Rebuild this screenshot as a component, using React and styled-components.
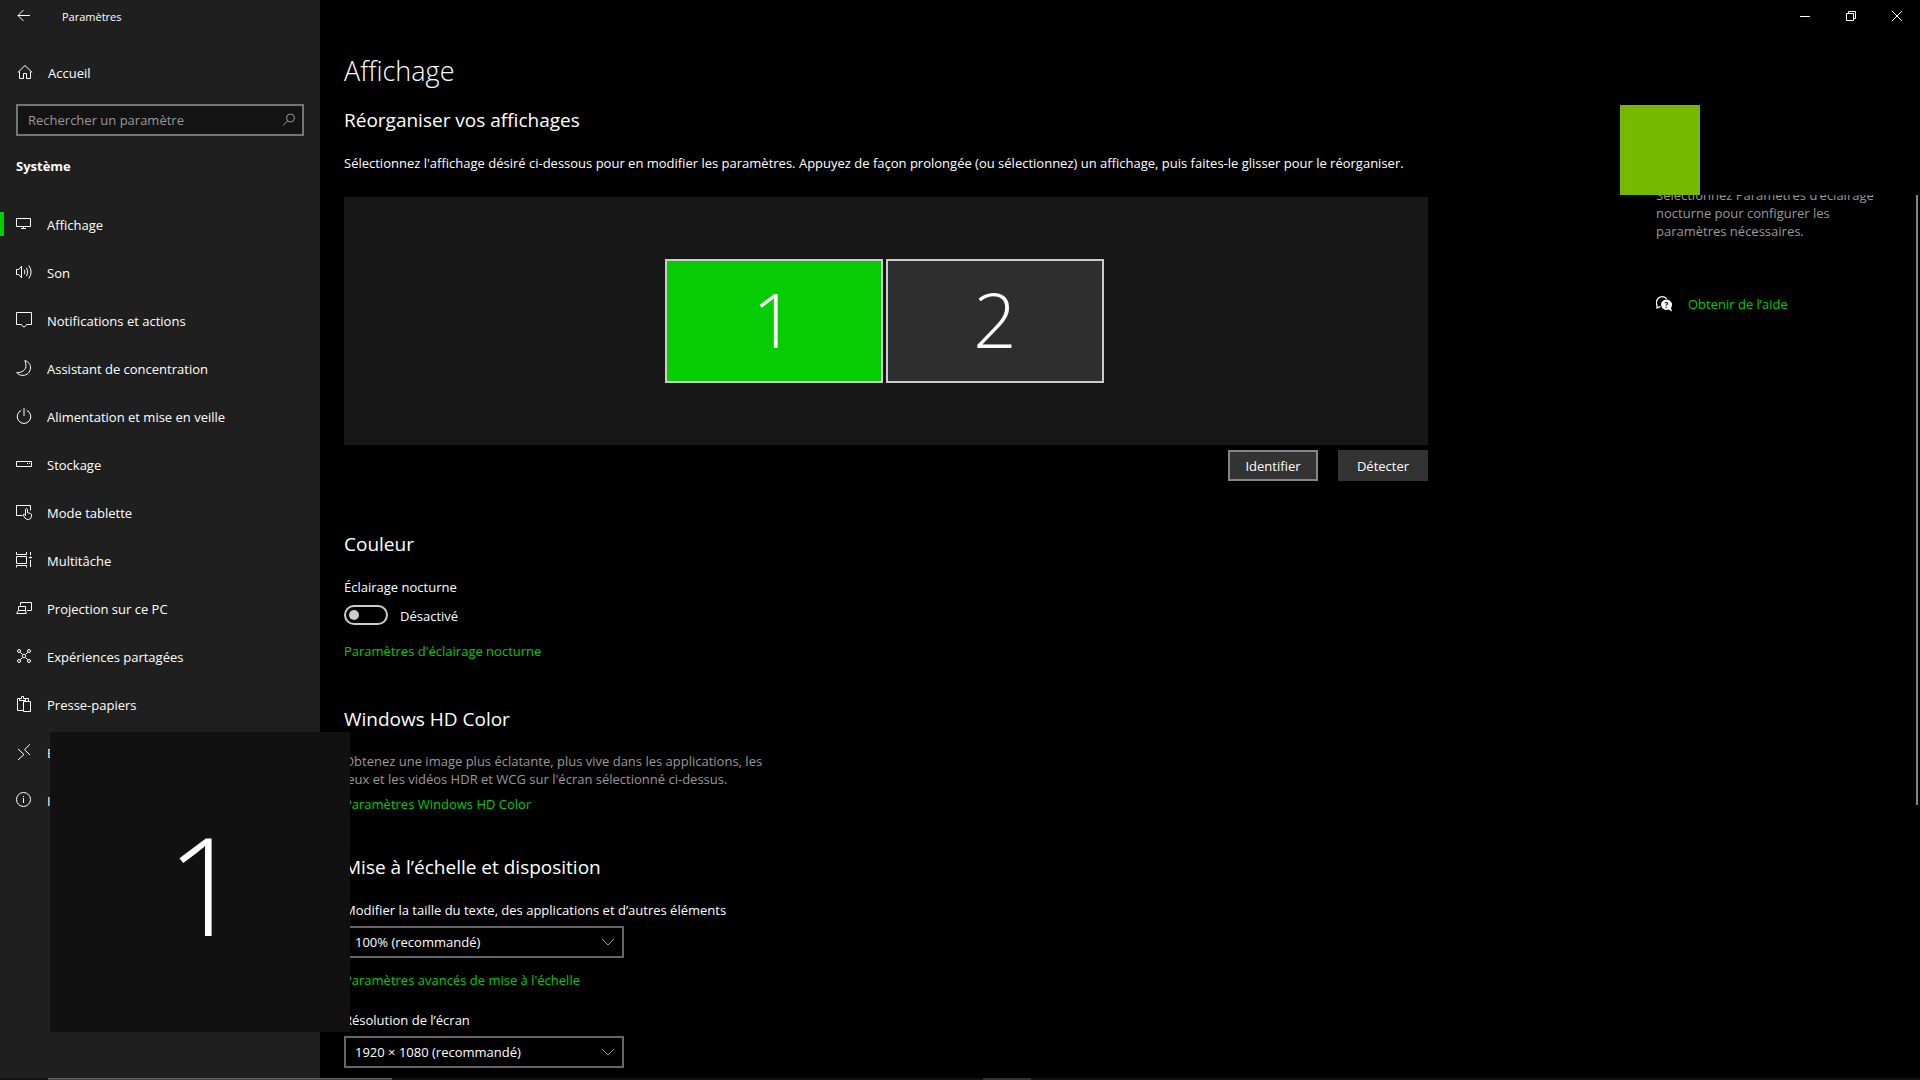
import React, { useState } from 'react';
import styled, { createGlobalStyle } from 'styled-components';

const GlobalStyle = createGlobalStyle`
  * {
    box-sizing: border-box;
  }

  body {
    margin: 0;
    background: #000;
    color: #fff;
    font-family: "Open Sans", "Noto Sans", sans-serif;
    font-size: 13px;
    line-height: 20px;
  }

  button, input, select {
    font: inherit;
    color: inherit;
    margin: 0;
  }
`

const Screen = styled.div`
  display: flex;
  flex-direction: column;
  min-height: 100vh;
`

const SettingsWindow = styled.div`
  display: flex;
  flex: 1;
`

const Sidebar = styled.aside`
  flex: 0 0 320px;
  background: #1f1f1f;
`

const TitleBar = styled.header`
  display: flex;
  align-items: center;
  height: 32px;
  font-size: 11px;
`

const IconButton = styled.button`
  display: flex;
  align-items: center;
  justify-content: center;
  width: ${props => props.$width}px;
  height: 32px;
  padding: 0;
  border: none;
  background: none;

  &:active {
    background: #333;
  }
`

const Label = styled.span`
  padding-top: 2px;
`

const AppName = styled(Label)`
  margin-left: 14px;
`

const SideLink = styled.a`
  display: flex;
  align-items: center;
  gap: 15px;
  height: 48px;
  padding-left: 16px;
  color: #fff;
  text-decoration: none;

  &:hover {
    background: #333;
  }
`

const HomeLink = styled(SideLink)`
  margin-top: 16px;
  padding-left: 17px;
`

const NavLink = styled(SideLink)`
  background: linear-gradient(#06cc04, #06cc04) no-repeat 0 center;
  background-size: ${props => props.$active ? '4px 24px' : '0 0'};
`

const SearchBox = styled.form`
  display: flex;
  align-items: center;
  height: 32px;
  margin: 8px 16px 0;
  padding-right: 5px;
  border: 2px solid #767676;
  background: #131313;
`

const SearchInput = styled.input`
  flex: 1;
  min-width: 0;
  padding: 0 10px;
  border: none;
  outline: none;
  background: none;

  &::placeholder {
    color: #999;
    opacity: 1;
  }
`

const SearchButton = styled.button`
  display: flex;
  padding: 0;
  border: none;
  background: none;
  color: #999;
`

const Category = styled.h2`
  margin: 20px 16px 24px;
  font-size: 13px;
  font-weight: 700;
`

const Main = styled.main`
  display: flex;
  flex: 1;
  flex-direction: column;
  min-width: 0;
`

const WindowControls = styled.div`
  display: flex;
  justify-content: flex-end;
`

const Columns = styled.div`
  display: flex;
  flex: 1;
  justify-content: space-between;
  padding-left: 24px;
`

const Content = styled.div`
  flex: 0 1 1084px;
  padding: 21px 0 10px;
`

const Title = styled.h1`
  margin: 0 0 16px;
  font-size: 27px;
  font-weight: 300;
  line-height: 36px;
`

const Heading = styled.h2`
  margin: 0 0 18px;
  font-size: 19px;
  font-weight: 400;
  line-height: 30px;
`

const Section = styled.section`
  display: flex;
  flex-direction: column;
  align-items: flex-start;
  margin-top: ${props => props.$top}px;
`

const Intro = styled.p`
  margin: 0 0 24px;
`

const Stage = styled.div`
  display: flex;
  align-items: center;
  justify-content: center;
  gap: 3px;
  height: 248px;
  padding-right: 3px;
  background: #171717;
`

const Monitor = styled.button`
  display: flex;
  align-items: center;
  justify-content: center;
  width: 218px;
  height: 124px;
  padding: 0 0 4px;
  border: 2px solid #ccc;
  background: ${props => props.$selected ? '#06cc04' : '#2e2e2e'};
  font-size: 76px;
  font-weight: 300;
  line-height: 100px;
`

const Actions = styled.div`
  display: flex;
  justify-content: flex-end;
  gap: 20px;
  margin-top: 5px;
`

const Button = styled.button`
  width: 90px;
  height: 31px;
  padding: 0;
  border: 2px solid ${props => props.$focused ? '#858585' : '#333'};
  background: #333;
`

const Link = styled.a`
  color: #00cc00;
  text-decoration: none;

  &:hover {
    color: #999;
  }
`

const SwitchRow = styled.div`
  display: flex;
  align-items: center;
  gap: 12px;
  height: 20px;
  margin: 8px 0 16px;
`

const Switch = styled.input`
  appearance: none;
  width: 44px;
  height: 20px;
  padding: 3px;
  border: 2px solid #ccc;
  border-radius: 10px;

  &::before {
    content: '';
    display: block;
    width: 10px;
    height: 10px;
    border-radius: 50%;
    background: #ccc;
  }

  &:checked {
    border-color: #06cc04;
    background: #06cc04;
  }

  &:checked::before {
    margin-left: auto;
    background: #fff;
  }
`

const Description = styled.p`
  max-width: 440px;
  margin: 0 0 6px;
  color: #999;
  line-height: 18px;
`

const Field = styled.div`
  display: flex;
  flex-direction: column;
  gap: 6px;
  margin-bottom: 12px;
`

const SelectBox = styled.div`
  display: grid;
  align-items: center;
  width: 280px;

  > * {
    grid-area: 1 / 1;
  }

  > svg {
    justify-self: end;
    margin-right: 8px;
    pointer-events: none;
  }
`

const Select = styled.select`
  appearance: none;
  width: 100%;
  height: 32px;
  padding: 0 32px 0 9px;
  border: 2px solid #666;
  border-radius: 0;
  background: #000;
`

const SecondField = styled(Field)`
  margin: 20px 0 0;
`

const HelpPane = styled.aside`
  flex: 0 0 264px;
  display: flex;
  justify-content: space-between;
  height: 610px;
  margin-top: 163px;
  overflow: hidden;
`

// the pane is scrolled by half a line
const HelpText = styled.div`
  width: 232px;
  margin-top: -9px;
`

const HelpParagraph = styled.p`
  margin: 0 0 54px;
  color: #999;
  line-height: 18px;
`

const HelpLink = styled(Link)`
  display: flex;
  align-items: center;
  gap: 16px;

  svg {
    color: #fff;
  }
`

const ScrollThumb = styled.div`
  width: 2px;
  margin-right: 2px;
  background: #858585;
`

const Taskbar = styled.footer`
  display: flex;
  height: 2px;
  padding-left: 48px;
  background: #111;
`

const TaskbarSearch = styled.div`
  width: 344px;
  border-top: 1px solid #666;
  background: #404040;
`

const TaskbarApp = styled.div`
  width: 48px;
  margin-left: 591px;
  background: #333;
`

const Identifier = styled.div`
  position: fixed;
  left: 50px;
  bottom: 48px;
  display: flex;
  align-items: center;
  justify-content: center;
  width: 300px;
  height: 300px;
  padding: 4px 0 0 10px;
  background: #111;
  font-size: 136px;
  font-weight: 300;
  line-height: 180px;
`

const Square = styled.div`
  position: fixed;
  top: 105px;
  right: 220px;
  width: 80px;
  height: 90px;
  background: #76b900;
`

const Icon = ({ children, size = 16 }) => (
  <svg width={size} height={size} viewBox={`0 0 ${size} ${size}`} fill="none" stroke="currentColor" aria-hidden="true">
    {children}
  </svg>
);

const nav = [
  {
    label: 'Affichage',
    icon: <path d="M.5 2.5h14v8H.5zM7.5 10.5v2M5 12.5h5" />,
  },
  {
    label: 'Son',
    icon: <path d="M.5 5.5h2.2L5.5 2.3v11.4L2.7 10.5H.5zM8.3 5.8q1.4 2.2 0 4.4M10.5 3.8q2.8 4.2 0 8.4M12.8 1.5q4.6 6.5 0 13" />,
  },
  {
    label: 'Notifications et actions',
    icon: <path d="M.5.5h15v12h-4.6L8 15.3 5.1 12.5H.5z" />,
  },
  {
    label: 'Assistant de concentration',
    icon: <path d="M8.8.6C12.5 1.5 14.7 4.5 14.5 8c-.3 4.2-3.5 7.4-7.5 7.4-2.6 0-4.9-1-6.3-2.8C6 12.8 10 10 10 5.5 10 3.7 9.600 2 8.800.6z" />,
  },
  {
    label: 'Alimentation et mise en veille',
    icon: <path d="M5.3 2.4a6.800 6.800 0 1 0 5.400 0M8 0v8" />,
  },
  {
    label: 'Stockage',
    icon: <path d="M.5 5.5h15v5H.5zM11 7.5h1M13 7.5h1" />,
  },
  {
    label: 'Mode tablette',
    icon: <path d="M6.5 11.5H.5v-10h14v5M9.500 11.800V5.300q1-1.300 2 0v3.400l3 .8q1 .3 1 1.300v1.400q-.2 3.200-3.200 3.300-2.300 0-3.500-1.700L7.300 11.300q-.2-1.300 1-1.200l1.200 1.200" />,
  },
  {
    label: 'Multitâche',
    icon: <path d="M.5 0v2.500h10V0M.5 4.500h10v7H.5zM.5 15.500v-2h10v2M14.500 0v3M14.500 8v7M13 5.500h3M14.500 4.500v2" />,
  },
  {
    label: 'Projection sur ce PC',
    icon: <path d="M4.500 5.500v-3h11v8H11M2.500 6.500h7v4h-7zM2.300 10.500.700 13.500h9.600L9.500 10.500" />,
  },
  {
    label: 'Expériences partagées',
    icon: (
      <>
        <path d="M4.200 4.200 6.500 6.500M11.800 4.200 9.500 6.500M4.200 11.800 6.500 9.500M11.800 11.800 9.500 9.500" />
        <circle cx="8" cy="8" r="1.8" />
        <circle cx="3" cy="3" r="1.5" />
        <circle cx="13" cy="3" r="1.5" />
        <circle cx="3" cy="13" r="1.5" />
        <circle cx="13" cy="13" r="1.5" />
      </>
    ),
  },
  {
    label: 'Presse-papiers',
    icon: <path d="M7 14.500H1.500v-12H4M9 2.500h3.500V5M3.500 4.500v-2H5.500V.5h2v2h2v2zM7.500 5.500h7v10h-7z" />,
  },
  {
    label: 'Bureau à distance',
    icon: <path d="M2 5l6 5.500L2 16M14 .3 8.500 5.700 14 11" />,
  },
  {
    label: 'Informations système',
    icon: <path d="M7.500.5a7 7 0 1 0 0 14 7 7 0 0 0 0-14zM7.500 6v5M7.500 4v1" />,
  },
];

const Chevron = () => (
  <Icon>
    <path d="M2 5l6 6 6-6" stroke="#999" />
  </Icon>
);

const App = () => {
  const [nightLight, setNightLight] = useState(false);
  const [selected, setSelected] = useState(1);

  return (
    <Screen>
      <GlobalStyle />
      <SettingsWindow>
        <Sidebar>
          <TitleBar>
            <IconButton $width={48} aria-label="Retour">
              <Icon><path d="M2 7.500h12M7.500 2 2 7.500 7.500 13" /></Icon>
            </IconButton>
            <AppName>Paramètres</AppName>
          </TitleBar>
          <HomeLink href="#accueil">
            <Icon><path d="M2.500 7.500v7h4v-5h3v5h4v-7M.800 8.500 8 1.500l7.200 7" /></Icon>
            <Label>Accueil</Label>
          </HomeLink>
          <SearchBox onSubmit={e => e.preventDefault()}>
            <SearchInput type="text" aria-label="Rechercher un paramètre" placeholder="Rechercher un paramètre" />
            <SearchButton aria-label="Rechercher">
              <Icon>
                <circle cx="9.5" cy="6" r="4" />
                <path d="M6.700 8.800 2 13.500" />
              </Icon>
            </SearchButton>
          </SearchBox>
          <Category>Système</Category>
          <nav>
            {nav.map((item, i) => (
              <NavLink key={item.label} href={`#${i}`} $active={i === 0}>
                <Icon>{item.icon}</Icon>
                <Label>{item.label}</Label>
              </NavLink>
            ))}
          </nav>
        </Sidebar>

        <Main>
          <WindowControls>
            <IconButton $width={46} aria-label="Réduire">
              <Icon size={10}><path d="M0 5.500h10" /></Icon>
            </IconButton>
            <IconButton $width={46} aria-label="Restaurer">
              <Icon size={10}><path d="M.5 2.500h7v7h-7zM2.500 2V.5h7v7H8" /></Icon>
            </IconButton>
            <IconButton $width={46} aria-label="Fermer">
              <Icon size={10}><path d="M0 0l10 10M10 0 0 10" /></Icon>
            </IconButton>
          </WindowControls>

          <Columns>
            <Content>
              <Title>Affichage</Title>
              <Heading>Réorganiser vos affichages</Heading>
              <Intro>
                Sélectionnez l'affichage désiré ci-dessous pour en modifier les paramètres. Appuyez de façon prolongée (ou sélectionnez) un affichage, puis faites-le glisser pour le réorganiser.
              </Intro>
              <Stage>
                {[1, 2].map(n => (
                  <Monitor key={n} $selected={selected === n} onClick={() => setSelected(n)}>
                    {n}
                  </Monitor>
                ))}
              </Stage>
              <Actions>
                <Button $focused>Identifier</Button>
                <Button>Détecter</Button>
              </Actions>

              <Section $top={48}>
                <Heading>Couleur</Heading>
                <label htmlFor="night">Éclairage nocturne</label>
                <SwitchRow>
                  <Switch
                    id="night"
                    type="checkbox"
                    role="switch"
                    checked={nightLight}
                    onChange={e => setNightLight(e.target.checked)}
                  />
                  <Label>{nightLight ? 'Activé' : 'Désactivé'}</Label>
                </SwitchRow>
                <Link href="#nocturne">Paramètres d'éclairage nocturne</Link>
              </Section>

              <Section $top={43}>
                <Heading>Windows HD Color</Heading>
                <Description>
                  Obtenez une image plus éclatante, plus vive dans les applications, les jeux et les vidéos HDR et WCG sur l'écran sélectionné ci-dessus.
                </Description>
                <Link href="#hd">Paramètres Windows HD Color</Link>
              </Section>

              <Section $top={38}>
                <Heading>Mise à l’échelle et disposition</Heading>
                <Field>
                  <label htmlFor="scale">Modifier la taille du texte, des applications et d’autres éléments</label>
                  <SelectBox>
                    <Select id="scale">
                      <option>100% (recommandé)</option>
                    </Select>
                    <Chevron />
                  </SelectBox>
                </Field>
                <Link href="#echelle">Paramètres avancés de mise à l'échelle</Link>
                <SecondField>
                  <label htmlFor="resolution">Résolution de l’écran</label>
                  <SelectBox>
                    <Select id="resolution">
                      <option>1920 × 1080 (recommandé)</option>
                    </Select>
                    <Chevron />
                  </SelectBox>
                </SecondField>
              </Section>
            </Content>

            <HelpPane>
              <HelpText>
                <HelpParagraph>
                  Sélectionnez Paramètres d’éclairage nocturne pour configurer les paramètres nécessaires.
                </HelpParagraph>
                <HelpLink href="#aide">
                  <Icon>
                    <path d="M4.500 10.300 1 12V9.500C-.3 6.500.5 2.500 4 1.200 7 .2 9.500 1.200 10.500 3" strokeWidth="1.3" />
                    <path d="M10.500 3.500a5.200 5.200 0 1 0 1.800 10L16 15.500l-1-3.800a5.200 5.200 0 0 0-4.500-8.200z" fill="currentColor" stroke="none" />
                    <text x="10.5" y="12" fontSize="8" fontWeight="700" textAnchor="middle" fill="#000" stroke="none">?</text>
                  </Icon>
                  Obtenir de l’aide
                </HelpLink>
              </HelpText>
              <ScrollThumb />
            </HelpPane>
          </Columns>
        </Main>
      </SettingsWindow>

      <Taskbar>
        <TaskbarSearch />
        <TaskbarApp />
      </Taskbar>

      <Identifier>1</Identifier>
      <Square />
    </Screen>
  );
};

export default App;
